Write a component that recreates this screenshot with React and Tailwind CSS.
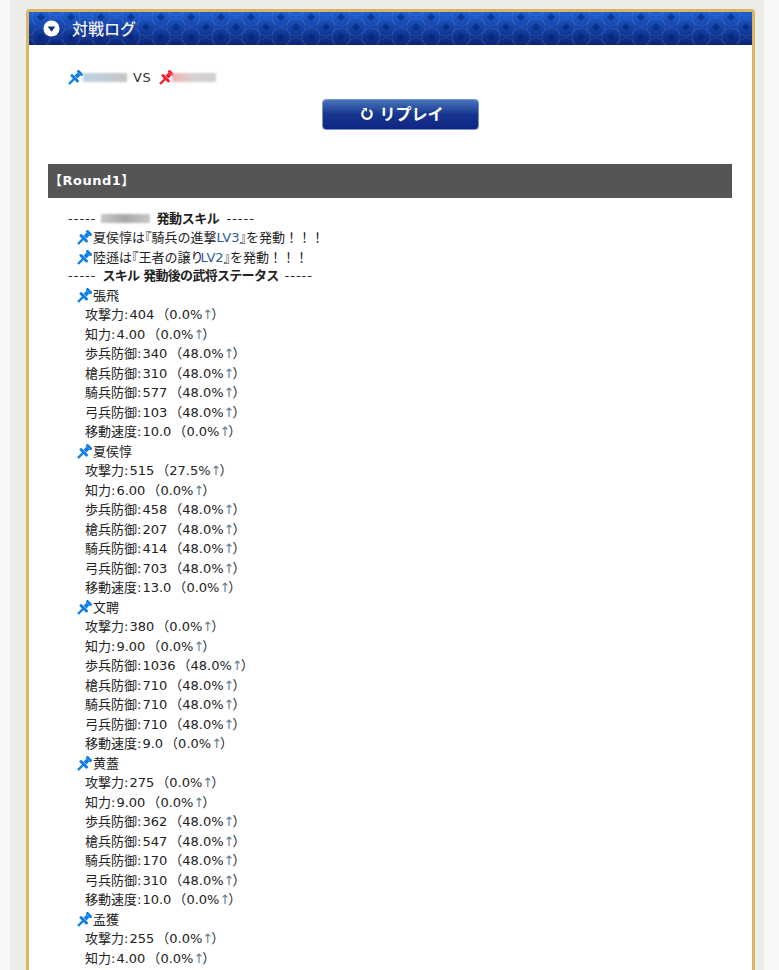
import React from 'react';

const GROUPS = [
  { name: '張飛', stats: [['攻撃力', '404', '0.0'], ['知力', '4.00', '0.0'], ['歩兵防御', '340', '48.0'], ['槍兵防御', '310', '48.0'], ['騎兵防御', '577', '48.0'], ['弓兵防御', '103', '48.0'], ['移動速度', '10.0', '0.0']] },
  { name: '夏侯惇', stats: [['攻撃力', '515', '27.5'], ['知力', '6.00', '0.0'], ['歩兵防御', '458', '48.0'], ['槍兵防御', '207', '48.0'], ['騎兵防御', '414', '48.0'], ['弓兵防御', '703', '48.0'], ['移動速度', '13.0', '0.0']] },
  { name: '文聘', stats: [['攻撃力', '380', '0.0'], ['知力', '9.00', '0.0'], ['歩兵防御', '1036', '48.0'], ['槍兵防御', '710', '48.0'], ['騎兵防御', '710', '48.0'], ['弓兵防御', '710', '48.0'], ['移動速度', '9.0', '0.0']] },
  { name: '黄蓋', stats: [['攻撃力', '275', '0.0'], ['知力', '9.00', '0.0'], ['歩兵防御', '362', '48.0'], ['槍兵防御', '547', '48.0'], ['騎兵防御', '170', '48.0'], ['弓兵防御', '310', '48.0'], ['移動速度', '10.0', '0.0']] },
  { name: '孟獲', stats: [['攻撃力', '255', '0.0'], ['知力', '4.00', '0.0']] },
];

function Pin({ red }) {
  const c = red ? '#f5222d' : '#0f7fe6';
  return (
    <svg viewBox="0 0 15 15" className="w-[15px] h-[15px] shrink-0" fill="none" stroke={c}>
      <path d="M10.5 1.5 L13.5 4.5" strokeWidth="3" strokeLinecap="round" />
      <path d="M11 4 L8 7" strokeWidth="4" />
      <path d="M4 5.5 L9.5 11" strokeWidth="3" strokeLinecap="round" />
      <path d="M6.5 8.5 L1 14" strokeWidth="2.4" />
    </svg>
  );
}

function Blur({ tint, w }) {
  return <span className={`inline-block h-[9px] blur-[1px] bg-gradient-to-r ${tint} ${w}`} />;
}

// half-width brackets, the reference sets these tight
function Bracket({ children }) {
  return <span className="[font-feature-settings:'halt']">{children}</span>;
}

function StatRow({ label, value, pct }) {
  return (
    <div className="pl-[17px] h-[19.5px]">
      {label}:<span className="ml-[1px]">{value}</span>
      <span className="ml-[2px]">（</span>{pct}%<span className="text-[#5f7f92] tracking-[-2px]">↑</span>）
    </div>
  );
}

export default function App() {
  return (
    <div
      className="h-[970px] overflow-hidden bg-[#f8f8f9] px-[10px] text-[13px] leading-[19.5px] text-[#222]"
      style={{ fontFamily: '"DejaVu Sans", "Noto Sans CJK JP", sans-serif' }}
    >
      <div className="w-[754px] h-full bg-[#eeece8] pt-[9px] px-[16px]">
        <div className="w-[729px] h-full bg-white border-[3px] border-b-0 border-[#d9b565] rounded-t-[4px]">
          {/* title bar */}
          <div className="relative h-[33px] bg-gradient-to-b from-[#1f5fd0] to-[#0c2478] flex items-center pl-[14px] overflow-hidden">
            <svg className="absolute inset-0 w-full h-full" aria-hidden="true">
              <defs>
                <pattern id="seigaiha" width="30" height="20" patternUnits="userSpaceOnUse" patternTransform="translate(12 5)">
                  <path d="M15 6 L19 10 L15 14 L11 10 Z M0 -4 L4 0 L0 4 L-4 0 Z M30 -4 L34 0 L30 4 L26 0 Z M0 16 L4 20 L0 24 L-4 20 Z M30 16 L34 20 L30 24 L26 20 Z" fill="#00206e" fillOpacity="0.55" />
                  <g fill="none" stroke="#7aa0e8" strokeWidth="0.5" strokeOpacity="0.35">
                    <circle cx="15" cy="10" r="9" />
                    <circle cx="0" cy="0" r="9" />
                    <circle cx="30" cy="0" r="9" />
                    <circle cx="0" cy="20" r="9" />
                    <circle cx="30" cy="20" r="9" />
                  </g>
                </pattern>
              </defs>
              <rect width="100%" height="100%" fill="url(#seigaiha)" />
            </svg>
            <svg viewBox="0 0 18 18" className="relative w-[17px] h-[17px]">
              <circle cx="9" cy="9" r="8.5" fill="#fff" />
              <path d="M5 7 H13 L9 12.5 Z" fill="#12307f" />
            </svg>
            <span className="relative ml-[12px] text-[16px] font-medium text-[#f2f2f2]" style={{ fontFamily: '"Noto Sans CJK JP", sans-serif' }}>対戦ログ</span>
          </div>

          <div className="pl-[19px] pr-[20px]">
            {/* players */}
            <div className="flex items-center h-[19.5px] mt-[23px] pl-[20px]">
              <Pin />
              <Blur tint="from-[#bcd4e6] to-[#c4c4c4]" w="w-[44px]" />
              <span className="ml-[6px] mr-[8px] text-[#333] tracking-[0.5px]">VS</span>
              <Pin red />
              <Blur tint="from-[#ecb4b4] via-[#d8d0d0] to-[#cfcfcf]" w="w-[44px] -ml-[2px]" />
            </div>

            {/* replay */}
            <div className="flex justify-center mt-[11px] ml-[21px]">
              <button className="w-[157px] h-[31px] pl-[3px] rounded-[4px] border border-[#7396cc] bg-gradient-to-b from-[#4a74ba] via-[#17358f] to-[#0f2684] flex items-center justify-center gap-[5px] text-white text-[16px] font-bold" style={{ fontFamily: '"Noto Sans CJK JP", sans-serif' }}>
                <svg viewBox="0 0 16 16" className="w-[14px] h-[14px]">
                  <path d="M5 3.6 A5.4 5.4 0 1 0 11 3.6" fill="none" stroke="#fff" strokeWidth="2.6" />
                  <path d="M3 1 H8 V5.5 Z" fill="#fff" />
                </svg>
                リプレイ
              </button>
            </div>

            {/* round bar */}
            <div className="mt-[34px] h-[34px] bg-[#555] flex items-center pl-[1px] text-white font-bold tracking-[0.5px]">【Round1】</div>

            {/* log */}
            <div className="mt-[11px] pl-[20px]">
              <div className="font-bold flex items-center">
                <span className="font-normal tracking-[1px]">-----</span>
                <Blur tint="from-[#c8c8c8] via-[#a8a8a8] to-[#c8c8c8]" w="w-[49px] ml-[5px] mr-[6px]" />
                <span className="tracking-[-0.4px]">発動スキル</span>
                <span className="font-normal ml-[7px] tracking-[1px]">-----</span>
              </div>
              <div className="flex items-center pl-[9px]">
                <Pin />
                <span className="ml-[1px]">夏侯惇は<Bracket>『</Bracket>騎兵の進撃<span className="text-[#2e5a9e]">LV3</span><Bracket>』</Bracket>を発動！！！</span>
              </div>
              <div className="flex items-center pl-[9px]">
                <Pin />
                <span className="ml-[1px]">陸遜は<Bracket>『</Bracket>王者の譲<span className="tracking-[-3px]">り</span><span className="text-[#2e5a9e]">LV2</span><Bracket>』</Bracket>を発動！！！</span>
              </div>
              <div className="font-bold flex items-center -mt-[1px]">
                <span className="font-normal tracking-[1px]">-----</span>
                <span className="ml-[6px] tracking-[-0.7px]">スキル 発動後の武将ステータス</span>
                <span className="font-normal ml-[6px] tracking-[1px]">-----</span>
              </div>
              {GROUPS.map(g => (
                <div key={g.name}>
                  <div className="flex items-center pl-[9px]">
                    <Pin />
                    <span className="ml-[1px]">{g.name}</span>
                  </div>
                  {g.stats.map(s => (
                    <StatRow key={s[0]} label={s[0]} value={s[1]} pct={s[2]} />
                  ))}
                </div>
              ))}
            </div>
          </div>
        </div>
      </div>
    </div>
  );
}
